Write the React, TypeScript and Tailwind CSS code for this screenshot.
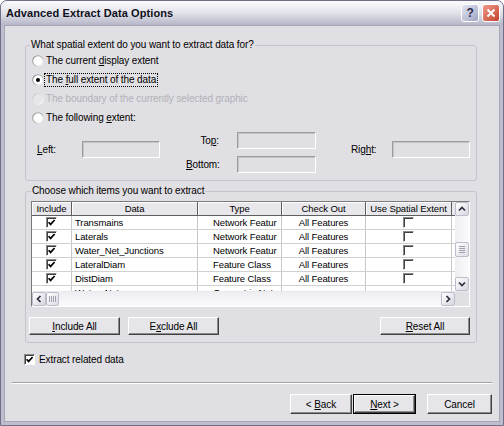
import React from "react";

const F = "font-['Liberation_Sans',Arial,sans-serif]";

function U({ children }: { children: React.ReactNode }) {
  return <span className="underline underline-offset-[1px]">{children}</span>;
}

function RadioDot({ checked, disabled }: { checked?: boolean; disabled?: boolean }) {
  return (
    <svg width="12" height="12" viewBox="0 0 12 12" className="shrink-0">
      <defs>
        <linearGradient id="rad-on" x1="0" y1="0" x2="1" y2="1">
          <stop offset="0" stopColor="#8a8a8a" />
          <stop offset="0.5" stopColor="#b8b8b8" />
          <stop offset="1" stopColor="#ffffff" />
        </linearGradient>
        <linearGradient id="rad-off" x1="0" y1="0" x2="1" y2="1">
          <stop offset="0" stopColor="#c4c4c4" />
          <stop offset="1" stopColor="#ffffff" />
        </linearGradient>
      </defs>
      <circle
        cx="6"
        cy="6"
        r="5.3"
        fill={disabled ? "#e6e5e9" : "#ffffff"}
        stroke={disabled ? "url(#rad-off)" : "url(#rad-on)"}
        strokeWidth="1.1"
      />
      {checked && <circle cx="6" cy="6" r="2" fill="#000" />}
    </svg>
  );
}

function Radio({
  checked,
  disabled,
  focus,
  children,
}: {
  checked?: boolean;
  disabled?: boolean;
  focus?: boolean;
  children: React.ReactNode;
}) {
  return (
    <div className="flex h-[19px] items-center">
      <RadioDot checked={checked} disabled={disabled} />
      <span
        className={`ml-[1px] px-[1px] leading-[12px] ${disabled ? "text-[#b2b1b8]" : "text-black"} ${
          focus ? "outline outline-1 outline-dotted outline-black" : ""
        }`}
      >
        {children}
      </span>
    </div>
  );
}

function Check({ checked }: { checked?: boolean }) {
  return (
    <span className="flex h-[11px] w-[11px] items-center justify-center border border-t-[#8a8a8a] border-l-[#8a8a8a] border-r-white border-b-white bg-white shadow-[inset_1px_1px_0_#404040]">
      {checked && (
        <svg width="9" height="9" viewBox="0 0 9 9">
          <polyline points="1.6,4.2 3.6,6.4 7.6,2" fill="none" stroke="#000" strokeWidth="1.7" />
        </svg>
      )}
    </span>
  );
}

function Field({ w }: { w: string }) {
  return (
    <div
      className={`${w} h-[17px] border border-t-[#9c9c9c] border-l-[#9c9c9c] border-r-white border-b-white bg-[#e0dfe3] shadow-[inset_1px_1px_0_#c4c4c8]`}
    />
  );
}

function Btn({ w, def, children }: { w: string; def?: boolean; children: React.ReactNode }) {
  return (
    <div className={`${w} ${def ? "border border-black" : ""}`}>
      <div
        className={`flex items-center justify-center whitespace-pre border border-t-white border-l-white border-r-[#404040] border-b-[#404040] bg-[#e6e5ea] shadow-[inset_-1px_-1px_0_#8c8c8c] ${
          def ? "h-[18px]" : "h-full"
        }`}
      >
        {children}
      </div>
    </div>
  );
}

const arrows: Record<string, string> = {
  up: "M3 7.5 L6 4.5 L9 7.5",
  down: "M3 4.5 L6 7.5 L9 4.5",
  left: "M7.5 3 L4.5 6 L7.5 9",
  right: "M4.5 3 L7.5 6 L4.5 9",
};

function ScrollBtn({ dir }: { dir: string }) {
  return (
    <div className="flex h-[14px] w-[14px] shrink-0 items-center justify-center rounded-[2px] border border-[#bcbccb] bg-gradient-to-br from-white to-[#d6d6e0]">
      <svg width="12" height="12" viewBox="0 0 12 12">
        <path d={arrows[dir]} fill="none" stroke="#2e2e3c" strokeWidth="1.7" />
      </svg>
    </div>
  );
}

function Grip({ vertical }: { vertical?: boolean }) {
  return (
    <div
      className={`flex shrink-0 items-center justify-center gap-[1px] rounded-[2px] border border-[#bcbccb] bg-gradient-to-br from-white to-[#dcdce4] ${
        vertical ? "h-[15px] w-[14px] flex-col" : "h-[14px] w-[13px] flex-row"
      }`}
    >
      {[0, 1, 2, 3].map((i) => (
        <span key={i} className={vertical ? "h-[1px] w-[6px] bg-[#a0a0b0]" : "h-[6px] w-[1px] bg-[#a0a0b0]"} />
      ))}
    </div>
  );
}

const cols = ["w-[40px]", "w-[126px]", "w-[84px]", "w-[84px]", "w-[86px]"];
const heads = ["Include", "Data", "Type", "Check Out", "Use Spatial Extent"];
const rows = [
  { data: "Transmains", type: "Network Featur", out: "All Features", check: true },
  { data: "Laterals", type: "Network Featur", out: "All Features", check: true },
  { data: "Water_Net_Junctions", type: "Network Featur", out: "All Features", check: true },
  { data: "LateralDiam", type: "Feature Class", out: "All Features", check: true },
  { data: "DistDiam", type: "Feature Class", out: "All Features", check: true },
  { data: "Water_Net", type: "Geometric Netw", out: "", check: false },
];

function Table() {
  return (
    <div className="w-[439px] border border-t-[#7a7a7a] border-l-[#7a7a7a] border-r-white border-b-white">
      <div className="flex h-[89px]">
        <div className="w-[423px] overflow-hidden bg-white text-[9.5px]">
          <div className="flex h-[14px] bg-[#e8e8ec]">
            {heads.map((h, i) => (
              <div
                key={h}
                className={`${cols[i]} flex shrink-0 items-center justify-center whitespace-nowrap border-r border-b border-r-[#5e5e5e] border-b-[#5e5e5e] shadow-[inset_1px_1px_0_#fff] leading-[12px]`}
              >
                {h}
              </div>
            ))}
            <div className="flex-1 border-b border-b-[#5e5e5e]" />
          </div>
          {rows.map((r, idx) => (
            <div key={idx} className="flex h-[14px] shrink-0 border-b border-b-[#d0d0d0] leading-[13px]">
              <div className={`${cols[0]} flex shrink-0 items-center justify-center border-r border-r-[#c8c8c8]`}>
                {r.check && <Check checked />}
              </div>
              <div className={`${cols[1]} shrink-0 overflow-hidden whitespace-nowrap border-r border-r-[#c8c8c8] pl-[3px]`}>
                {r.data}
              </div>
              <div className={`${cols[2]} shrink-0 overflow-hidden whitespace-nowrap border-r border-r-[#c8c8c8] pl-[15px]`}>
                {r.type}
              </div>
              <div className={`${cols[3]} shrink-0 overflow-hidden whitespace-nowrap border-r border-r-[#c8c8c8] text-center`}>
                {r.out}
              </div>
              <div className={`${cols[4]} flex shrink-0 items-center justify-center border-r border-r-[#c8c8c8]`}>
                {r.check && <Check />}
              </div>
            </div>
          ))}
        </div>
        <div className="flex w-[14px] flex-col bg-gradient-to-r from-[#eeeef2] to-[#fbfbfd]">
          <ScrollBtn dir="up" />
          <div className="flex-1 pt-[26px]">
            <Grip vertical />
          </div>
          <ScrollBtn dir="down" />
        </div>
      </div>
      <div className="flex h-[15px] border-t border-t-[#e8e8ec]">
        <div className="flex w-[423px] bg-gradient-to-b from-[#eeeef2] to-[#fbfbfd]">
          <ScrollBtn dir="left" />
          <Grip />
          <div className="flex-1" />
          <ScrollBtn dir="right" />
        </div>
        <div className="w-[14px] bg-[#e0dfe3]" />
      </div>
    </div>
  );
}

export default function App() {
  return (
    <div
      className={`${F} flex h-[426px] w-[504px] flex-col overflow-hidden rounded-t-[7px] border border-[#6e6e88] bg-[#bdbdce] text-[10px] tracking-[-0.1px] text-black`}
    >
      {/* title bar */}
      <div className="flex h-[24px] shrink-0 items-center justify-between bg-gradient-to-b from-[#fbfbfd] via-[#e2e2ea] to-[#b6b6c8] pl-[5px] pr-[3px]">
        <span className="text-[11px] font-bold tracking-[0.1px] text-[#10101a]">Advanced Extract Data Options</span>
        <div className="flex gap-[3px]">
          <div className="flex h-[18px] w-[18px] items-center justify-center rounded-[3px] border border-white bg-gradient-to-br from-[#e4e6f2] to-[#9fa4c2] text-[12px] font-bold text-[#2a2a48]">
            ?
          </div>
          <div className="flex h-[18px] w-[18px] items-center justify-center rounded-[3px] border border-white bg-gradient-to-br from-[#ef9a8a] to-[#c2402e]">
            <svg width="10" height="10" viewBox="0 0 10 10">
              <path d="M1.5 1.5 L8.5 8.5 M8.5 1.5 L1.5 8.5" stroke="#fff" strokeWidth="2" />
            </svg>
          </div>
        </div>
      </div>

      {/* body */}
      <div className="mx-[3px] mb-[3px] flex flex-1 flex-col border border-[#a6a6b8] bg-[#e0dfe3] pt-[13px]">
        <fieldset className="ml-[20px] w-[452px] rounded-[3px] border border-[#c4c4cc] pb-[7px] pl-[6px] pr-[6px]">
          <legend className="ml-[-2px] px-[1px] leading-[12px]">What spatial extent do you want to extract data for?</legend>
          <Radio>
            The current <U>d</U>isplay extent
          </Radio>
          <Radio checked focus>
            The <U>f</U>ull extent of the data
          </Radio>
          <Radio disabled>The boundary of the currently selected graphic</Radio>
          <Radio>
            The following <U>e</U>xtent:
          </Radio>
          <div className="mt-[5px] flex items-start pl-[5px]">
            <div className="mt-[9px] flex items-center">
              <span className="w-[45px]">
                <U>L</U>eft:
              </span>
              <Field w="w-[78px]" />
            </div>
            <div className="ml-[26px] grid grid-cols-[33px_79px] gap-x-[18px] gap-y-[7px]">
              <span className="self-center text-right">
                To<U>p</U>:
              </span>
              <Field w="w-[79px]" />
              <span className="self-center text-right">
                <U>B</U>ottom:
              </span>
              <Field w="w-[79px]" />
            </div>
            <div className="ml-[35px] mt-[9px] flex items-center">
              <span className="w-[41px]">
                Rig<U>h</U>t:
              </span>
              <Field w="w-[78px]" />
            </div>
          </div>
        </fieldset>

        <fieldset className="ml-[20px] mt-[4px] w-[452px] rounded-[3px] border border-[#c4c4cc] pb-[7px] pl-[5px] pr-[6px]">
          <legend className="px-[1px] leading-[12px]">Choose which items you want to extract</legend>
          <div className="mt-[4px]">
            <Table />
          </div>
          <div className="mt-[10px] flex h-[18px] items-stretch">
            <div className="ml-[-2px]">
              <Btn w="w-[91px] h-[18px]">
                <U>I</U>nclude All
              </Btn>
            </div>
            <div className="ml-[8px]">
              <Btn w="w-[91px] h-[18px]">
                E<U>x</U>clude All
              </Btn>
            </div>
            <div className="flex-1" />
            <Btn w="w-[90px] h-[18px]">
              <U>R</U>eset All
            </Btn>
          </div>
        </fieldset>

        <div className="mt-[10px] flex h-[13px] items-center pl-[19px]">
          <Check checked />
          <span className="ml-[4px]">Extract related data</span>
        </div>

        <div className="mx-[7px] mt-[16px] h-[2px] border-t border-t-[#a0a0a8] border-b border-b-white" />

        <div className="mr-[7px] mt-[10px] flex justify-end">
          <Btn w="w-[62px] h-[20px]">
            {"< "}
            <U>B</U>ack
          </Btn>
          <div className="ml-[1px]">
            <Btn w="w-[63px] h-[20px]" def>
              <U>N</U>
              {"ext >"}
            </Btn>
          </div>
          <div className="ml-[11px]">
            <Btn w="w-[65px] h-[20px]">Cancel</Btn>
          </div>
        </div>
      </div>
    </div>
  );
}
